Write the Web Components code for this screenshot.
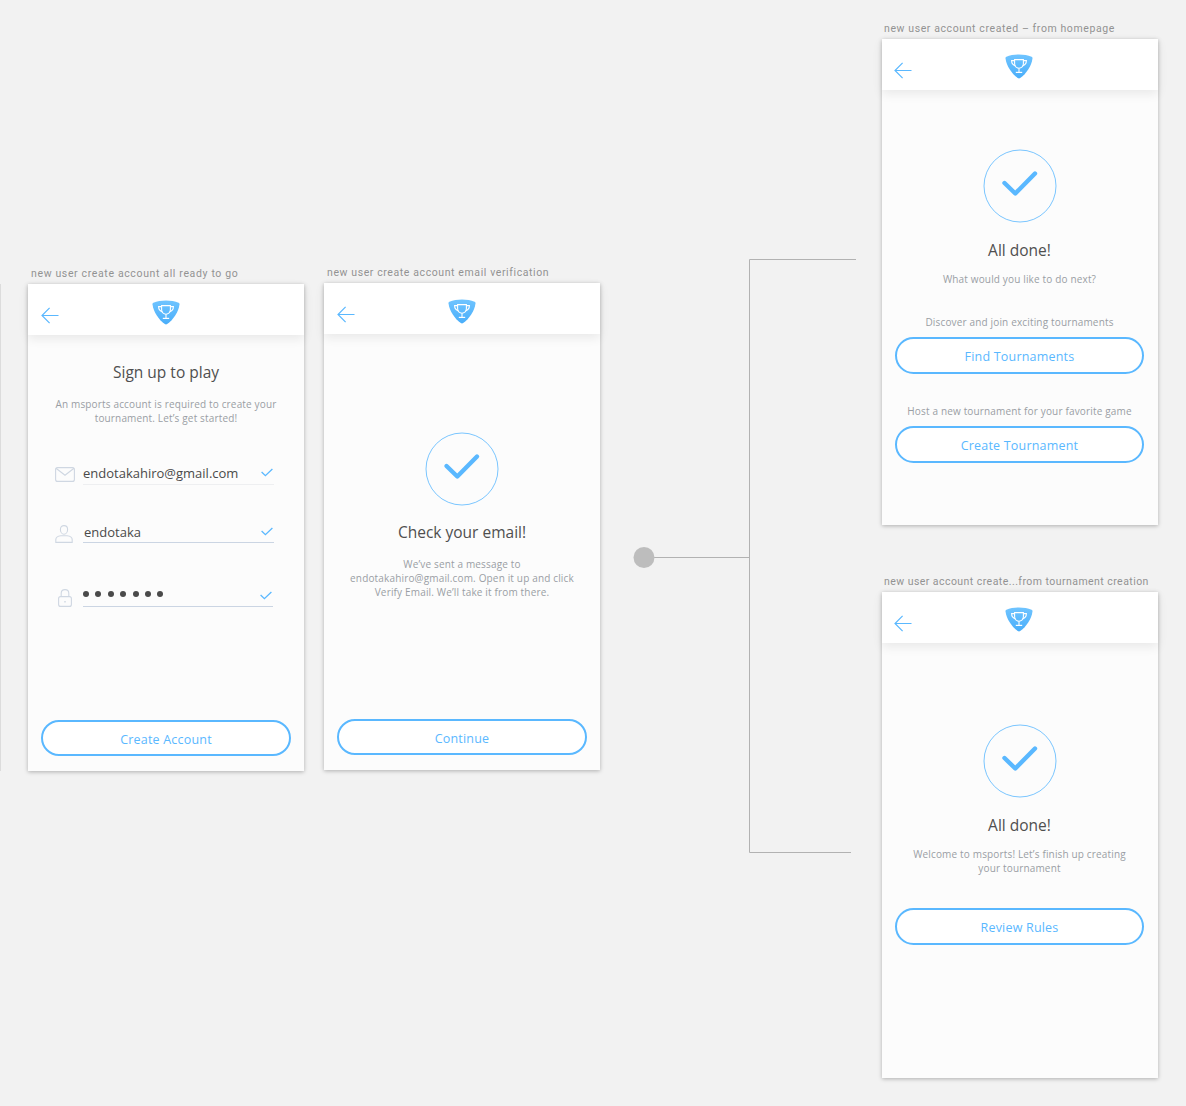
<!DOCTYPE html>
<html>
<head>
<meta charset="utf-8">
<title>msports signup flow</title>
<style>
html, body { margin: 0; padding: 0; }
body {
    position: relative;
    width: 1186px;
    height: 1106px;
    overflow: hidden;
    background: #f2f2f2;
    font-family: "Open Sans", sans-serif;
}
</style>
</head>
<body>

<flow-lines></flow-lines>

<art-board label="new user create account all ready to go" spacing="0.64" style="left:28px;top:284px">
    <screen-title style="margin-top:27px">Sign up to play</screen-title>
    <screen-note style="margin-top:15px">An msports account is required to create your<br>tournament. Let’s get started!</screen-note>
    <field-row kind="mail" style="margin-top:34px">endotakahiro@gmail.com</field-row>
    <field-row kind="user" style="margin-top:32px">endotaka</field-row>
    <field-row kind="lock" style="margin-top:38px"><pass-dots></pass-dots></field-row>
    <pill-button style="margin-top:auto;height:36px;padding-top:4px">Create Account</pill-button>
</art-board>

<art-board label="new user create account email verification" spacing="0.6" style="left:324px;top:283px">
    <check-badge style="margin-top:98px"></check-badge>
    <screen-title style="margin-top:16px">Check your email!</screen-title>
    <screen-note style="margin-top:15px">We’ve sent a message to<br>endotakahiro@gmail.com. Open it up and click<br>Verify Email. We’ll take it from there.</screen-note>
    <pill-button style="margin-top:auto;height:36px;padding-top:4px">Continue</pill-button>
</art-board>

<art-board tight label="new user account created – from homepage" spacing="0.6" style="left:882px;top:39px">
    <check-badge style="margin-top:59px"></check-badge>
    <screen-title style="margin-top:17px">All done!</screen-title>
    <screen-note style="margin-top:12px">What would you like to do next?</screen-note>
    <screen-note style="margin-top:29px">Discover and join exciting tournaments</screen-note>
    <pill-button style="margin-top:8px">Find Tournaments</pill-button>
    <screen-note style="margin-top:30px">Host a new tournament for your favorite game</screen-note>
    <pill-button style="margin-top:8px">Create Tournament</pill-button>
</art-board>

<art-board tight label="new user account create...from tournament creation" spacing="0.45" style="left:882px;top:592px">
    <check-badge style="margin-top:81px"></check-badge>
    <screen-title style="margin-top:17px">All done!</screen-title>
    <screen-note style="margin-top:12px">Welcome to msports! Let’s finish up creating<br>your tournament</screen-note>
    <pill-button style="margin-top:33px">Review Rules</pill-button>
</art-board>

<script>
const artBoardTemplate = document.createElement('template');
artBoardTemplate.innerHTML = `
<style>
:host {
    position: absolute;
    display: block;
    width: 276px;
    height: 487px;
}
:host([tight]) { height: 486px; }
.label {
    position: absolute;
    left: 3px;
    top: -17px;
    font: 400 10.5px/14px Roboto, sans-serif;
    color: #929292;
    white-space: nowrap;
}
:host([tight]) .label { left: 2px; }
.frame {
    display: flex;
    flex-direction: column;
    height: 100%;
    background: #fcfcfc;
    box-shadow: 0 1px 4px rgba(0, 0, 0, 0.28);
}
.bar {
    position: relative;
    flex: none;
    display: flex;
    align-items: center;
    justify-content: center;
    height: 51px;
    background: #fff;
    box-shadow: 0 4px 10px rgba(0, 0, 0, 0.08);
}
:host([tight]) .bar { padding-right: 2px; box-sizing: border-box; }
.back {
    position: absolute;
    left: 13px;
    top: 23px;
}
:host([tight]) .back { left: 12px; }
.logo {
    margin-top: 6px;
}
:host([tight]) .logo { margin-top: 4px; }
.body {
    flex: 1;
    display: flex;
    flex-direction: column;
    padding: 0 13px 15px;
}
:host([tight]) .body { padding-right: 14px; }
</style>
<div class="label"></div>
<div class="frame">
    <div class="bar">
        <svg class="back" width="18" height="17" viewBox="0 0 18 17" fill="none" stroke="#5ab8ff" stroke-width="1.2">
            <path d="M17.500 8.500H1M8.600 .8 1 8.500l7.600 7.700"/>
        </svg>
        <svg class="logo" width="28" height="25" viewBox="0 0 28 25">
            <defs>
                <linearGradient id="shield" x1="0" y1="0" x2="0" y2="1">
                    <stop offset="0" stop-color="#6fc4ff"/>
                    <stop offset="1" stop-color="#4aaefa"/>
                </linearGradient>
            </defs>
            <path fill="url(#shield)" d="M14 .5C18.600.5 23 1.200 26.600 2.800 27.400 3.200 27.600 3.800 27.500 4.600 26.600 11.600 21.400 20 15.200 24 14.400 24.500 13.600 24.500 12.800 24 6.600 20 1.400 11.600.5 4.600.4 3.800.6 3.200 1.400 2.800 5 1.200 9.400.5 14 .5Z"/>
            <g fill="none" stroke="#fff" stroke-width="1.100">
                <path d="M9.600 5.600H18.400V9.600C18.400 12.400 16.400 14.200 14 14.200S9.600 12.400 9.600 9.600Z"/>
                <path d="M9.600 6.600H6.600C6.600 9.600 7.800 11.200 10.400 11.800M18.400 6.600H21.400C21.400 9.600 20.200 11.200 17.600 11.800"/>
                <path d="M14 14.200V18"/>
            </g>
            <path fill="#fff" d="M10.800 17.800H17.200V19H10.800Z"/>
        </svg>
    </div>
    <div class="body"><slot></slot></div>
</div>
`;

class ArtBoard extends HTMLElement {
    constructor() {
        super();
        this.attachShadow({ mode: 'open' });
        this.shadowRoot.appendChild(artBoardTemplate.content.cloneNode(true));
        const label = this.shadowRoot.querySelector('.label');
        label.textContent = this.getAttribute('label');
        label.style.letterSpacing = this.getAttribute('spacing') + 'px';
    }
}
customElements.define('art-board', ArtBoard);

const screenTitleTemplate = document.createElement('template');
screenTitleTemplate.innerHTML = `
<style>
:host {
    display: block;
    font: 400 15.5px/20px "Open Sans", sans-serif;
    color: #4f4f4f;
    text-align: center;
}
</style>
<slot></slot>
`;

class ScreenTitle extends HTMLElement {
    constructor() {
        super();
        this.attachShadow({ mode: 'open' });
        this.shadowRoot.appendChild(screenTitleTemplate.content.cloneNode(true));
    }
}
customElements.define('screen-title', ScreenTitle);

const screenNoteTemplate = document.createElement('template');
screenNoteTemplate.innerHTML = `
<style>
:host {
    display: block;
    font: 400 10px/14px "Open Sans", sans-serif;
    letter-spacing: 0.16px;
    color: #9a9ea4;
    text-align: center;
    white-space: nowrap;
}
</style>
<slot></slot>
`;

class ScreenNote extends HTMLElement {
    constructor() {
        super();
        this.attachShadow({ mode: 'open' });
        this.shadowRoot.appendChild(screenNoteTemplate.content.cloneNode(true));
    }
}
customElements.define('screen-note', ScreenNote);

const pillButtonTemplate = document.createElement('template');
pillButtonTemplate.innerHTML = `
<style>
:host {
    display: flex;
    flex: none;
    align-items: center;
    justify-content: center;
    box-sizing: border-box;
    height: 37px;
    padding-top: 3px;
    border: 2px solid #5ab8ff;
    border-radius: 19px;
    font: 400 12.5px/16px "Open Sans", sans-serif;
    letter-spacing: 0.2px;
    color: #5ab8ff;
    background: #fff;
}
</style>
<slot></slot>
`;

class PillButton extends HTMLElement {
    constructor() {
        super();
        this.attachShadow({ mode: 'open' });
        this.shadowRoot.appendChild(pillButtonTemplate.content.cloneNode(true));
    }
}
customElements.define('pill-button', PillButton);

const checkBadgeTemplate = document.createElement('template');
checkBadgeTemplate.innerHTML = `
<style>
:host {
    display: block;
    flex: none;
    align-self: center;
    width: 74px;
    height: 74px;
}
svg { display: block; }
</style>
<svg width="74" height="74" viewBox="0 0 74 74" fill="none" stroke="#5ab8ff">
    <circle cx="37" cy="37" r="36" stroke-width="1" opacity=".8"/>
    <path d="M21.500 34 32.300 44.500 52 24.500" stroke-width="4.400" stroke-linecap="round" stroke-linejoin="round"/>
</svg>
`;

class CheckBadge extends HTMLElement {
    constructor() {
        super();
        this.attachShadow({ mode: 'open' });
        this.shadowRoot.appendChild(checkBadgeTemplate.content.cloneNode(true));
    }
}
customElements.define('check-badge', CheckBadge);

const fieldIcons = {
    mail: `<svg width="20" height="15" viewBox="0 0 20 15" fill="none" stroke="#cfd7e2" stroke-width="1.100">
        <rect x=".6" y=".6" width="18.800" height="13.800" rx="2"/><path d="M1 1.200 10 8.200 19 1.200"/></svg>`,
    user: `<svg width="18" height="18" viewBox="0 0 18 18" fill="none" stroke="#cfd7e2" stroke-width="1.100">
        <path d="M9 .6C11.200.6 12.600 2.200 12.600 4.400 12.600 7 11 9.200 9 9.200S5.400 7 5.400 4.400C5.400 2.200 6.800.6 9 .6Z"/>
        <path d="M.8 17.400V14.800C.8 12.400 3.600 11 6 10.800H12C14.400 11 17.200 12.400 17.200 14.800V17.400Z"/></svg>`,
    lock: `<svg width="14" height="18" viewBox="0 0 14 18" fill="none" stroke="#cfd7e2" stroke-width="1.100">
        <rect x=".6" y="7.600" width="12.800" height="9.800" rx="2"/>
        <path d="M3.200 7.600V4.400C3.200 2 4.800.6 7 .6S10.800 2 10.800 4.400V7.600"/>
        <path d="M7 12v1.400" stroke-width="1.400"/></svg>`
};

const fieldRowTemplate = document.createElement('template');
fieldRowTemplate.innerHTML = `
<style>
:host {
    display: flex;
    flex: none;
    align-items: flex-end;
    height: 26px;
    margin-left: 14px;
    margin-right: 17px;
}
:host([kind="lock"]) { margin-right: 18px; }
.icon {
    flex: none;
    display: flex;
    width: 20px;
    margin-right: 8px;
}
.icon svg { display: block; }
:host([kind="mail"]) .icon { margin-bottom: 3px; }
:host([kind="lock"]) .icon { padding-left: 3px; width: 17px; }
.line {
    flex: 1;
    display: flex;
    align-items: flex-end;
    justify-content: space-between;
    height: 25px;
    border-bottom: 1px solid #cbd5e3;
    font: 400 13px/20px "Open Sans", sans-serif;
    color: #4a4a4a;
}
:host([kind="mail"]) .line { border-bottom-color: #eeeff1; }
:host([kind="mail"]) .text { margin-bottom: 1px; }
:host([kind="user"]) .line { padding-left: 1px; }
.tick { flex: none; margin-right: 1px; margin-bottom: 6px; }
:host([kind="mail"]) .tick { margin-bottom: 7px; }
</style>
<div class="icon"></div>
<div class="line">
    <span class="text"><slot></slot></span>
    <svg class="tick" width="12" height="9" viewBox="0 0 12 9" fill="none" stroke="#5ab8ff" stroke-width="1.300">
        <path d="M.6 4 4.400 7.600 11.400 1"/>
    </svg>
</div>
`;

class FieldRow extends HTMLElement {
    constructor() {
        super();
        this.attachShadow({ mode: 'open' });
        this.shadowRoot.appendChild(fieldRowTemplate.content.cloneNode(true));
        this.shadowRoot.querySelector('.icon').innerHTML = fieldIcons[this.getAttribute('kind')];
    }
}
customElements.define('field-row', FieldRow);

const passDotsTemplate = document.createElement('template');
passDotsTemplate.innerHTML = `
<style>
:host {
    display: flex;
    gap: 6.400px;
    margin-bottom: 9px;
}
i {
    display: block;
    width: 6px;
    height: 6px;
    border-radius: 50%;
    background: #4a4a4a;
}
</style>
<i></i><i></i><i></i><i></i><i></i><i></i><i></i>
`;

class PassDots extends HTMLElement {
    constructor() {
        super();
        this.attachShadow({ mode: 'open' });
        this.shadowRoot.appendChild(passDotsTemplate.content.cloneNode(true));
    }
}
customElements.define('pass-dots', PassDots);

// connector diagram between the artboards, these sit on the free canvas
const flowLinesTemplate = document.createElement('template');
flowLinesTemplate.innerHTML = `
<style>
:host {
    position: absolute;
    left: 0;
    top: 0;
    display: block;
}
svg { display: block; }
</style>
<svg width="1186" height="1106" fill="none" stroke="#b2b2b2">
    <path d="M.5 284V771" stroke="#dcdcdc"/>
    <path d="M856 259.500H749.500V852.500H851"/>
    <path d="M654 557.500H749.500"/>
    <circle cx="644" cy="557.500" r="10.500" fill="#bdbdbd" stroke="none"/>
</svg>
`;

class FlowLines extends HTMLElement {
    constructor() {
        super();
        this.attachShadow({ mode: 'open' });
        this.shadowRoot.appendChild(flowLinesTemplate.content.cloneNode(true));
    }
}
customElements.define('flow-lines', FlowLines);
</script>
</body>
</html>
